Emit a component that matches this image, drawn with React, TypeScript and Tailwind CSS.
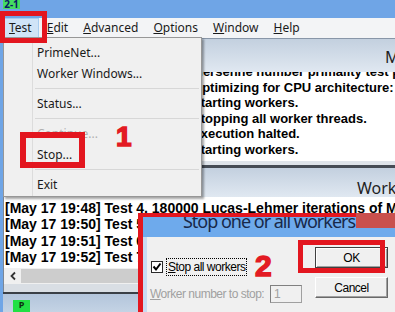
import React from "react";

type MenuEntry = { label: string; disabled?: boolean } | "sep";

const menuBar = ["Test", "Edit", "Advanced", "Options", "Window", "Help"];

const testMenu: MenuEntry[] = [
  { label: "PrimeNet..." },
  { label: "Worker Windows..." },
  "sep",
  { label: "Status..." },
  "sep",
  { label: "Continue...", disabled: true },
  { label: "Stop..." },
  "sep",
  { label: "Exit" },
];

const mainLines = [
  "[Main thread May 17 19:47] Mersenne number primality test program version 28.5",
  "[Main thread May 17 19:47] Optimizing for CPU architecture: Core i3/i5/i7, L2 cache size: 256 KB",
  "[Main thread May 17 19:47] Starting workers.",
  "[Main thread May 17 19:48] Stopping all worker threads.",
  "[Main thread May 17 19:48] Execution halted.",
  "[Main thread May 17 19:48] Starting workers.",
];

const workerLines = [
  "[May 17 19:48] Test 4, 180000 Lucas-Lehmer iterations of M4444091 using FMA3 FFT length 224K.",
  "[May 17 19:50] Test 5, 180000 Lucas-Lehmer iterations of M3888091 using FMA3 FFT length 192K.",
  "[May 17 19:51] Test 6, 180000 Lucas-Lehmer iterations of M3888089 using FMA3 FFT length 192K.",
  "[May 17 19:52] Test 7, 180000 Lucas-Lehmer iterations of M3888087 using FMA3 FFT length 192K.",
];

function TestMenu() {
  return (
    <div className="absolute left-[3px] top-[37px] flex h-[160px] w-[199px] flex-col border border-[#979797] bg-[#f0f0f0] pt-[4px] text-[12px] shadow-[2px_2px_2px_rgba(0,0,0,0.35)]">
      {testMenu.map((entry, i) =>
        entry === "sep" ? (
          <div key={i} className="flex h-[9px]">
            <div className="w-[29px] border-r border-[#dcdcdc]" />
            <div className="flex flex-1 items-center px-[2px]">
              <div className="h-px w-full bg-[#d7d7d7]" />
            </div>
          </div>
        ) : (
          <div key={i} className="flex h-[21px]">
            <div className="w-[29px] border-r border-[#dcdcdc]" />
            <div className={`flex items-center pl-[4px] ${entry.disabled ? "text-[#b0b0b0]" : "text-[#1a1a1a]"}`}>
              {entry.label}
            </div>
          </div>
        )
      )}
      <div className="flex flex-1">
        <div className="w-[29px] border-r border-[#dcdcdc]" />
      </div>
    </div>
  );
}

function StopDialog() {
  return (
    <div className="absolute left-[143px] top-[217px] flex h-[100px] w-[260px] flex-col">
      <div className="flex h-[20px] justify-center overflow-hidden bg-[#6eaaec] pr-[8px]">
        <span className="-mt-[5px] whitespace-nowrap text-[18px] leading-none tracking-[-1px] text-[#18294a]">
          Stop one or all workers
        </span>
      </div>
      <div className="flex flex-1 border-l-[4px] border-[#c8dbf2] bg-[#f0f0f0] pt-[10px] font-['Liberation_Sans',Arial,sans-serif] text-[12px] tracking-[-0.5px] text-black">
        <div className="flex w-[168px] flex-col pt-[11px]">
          <div className="flex h-[18px] items-center pl-[4px]">
            <div className="flex h-[12px] w-[12px] items-center justify-center border border-[#2a2a2a] bg-white">
              <svg width="10" height="10" viewBox="0 0 10 10">
                <polyline points="1.5,4.5 4,7.5 8.5,1.5" fill="none" stroke="#000" strokeWidth="2" />
              </svg>
            </div>
            <div className="ml-[3px] flex h-[18px] items-center whitespace-nowrap border border-dotted border-black px-[1px]">
              <span>
                <u>S</u>top all workers
              </span>
            </div>
          </div>
          <div className="mt-[9px] flex h-[18px] items-center pl-[3px] text-[#a0a0a0]">
            <span className="w-[120px] whitespace-nowrap">
              <u>W</u>orker number to stop:
            </span>
            <div className="flex h-[18px] w-[32px] items-center border border-[#a0a0a0] border-l-[#808080] border-t-[#808080] pl-[3px]">
              1
            </div>
          </div>
        </div>
        <div className="flex flex-col gap-[9px]">
          <div className="flex h-[21px] w-[73px] items-center justify-center border border-[#404040] bg-[#f0f0f0] shadow-[inset_1px_1px_0_#fff,inset_-1px_-1px_0_#a0a0a0]">
            OK
          </div>
          <div className="flex h-[21px] w-[73px] items-center justify-center border border-b-[#696969] border-l-white border-r-[#696969] border-t-white bg-[#f0f0f0] shadow-[inset_-1px_-1px_0_#a0a0a0]">
            Cancel
          </div>
        </div>
      </div>
    </div>
  );
}

export default function App() {
  return (
    <div className="relative h-[312px] w-[395px] overflow-hidden bg-[#6fa5e6] font-['Noto_Sans',sans-serif] text-[#1a1a1a]">
      {/* app title strip */}
      <div className="flex h-[18px] items-start pl-[3px]">
        <div className="flex h-[9px] w-[17px] items-end justify-center overflow-hidden bg-[#44de60] text-[10px] font-bold leading-none text-[#0b1a66]">
          2-1
        </div>
      </div>

      {/* menu bar */}
      <div className="flex h-[20px] items-stretch gap-px bg-[#f3f4f6] pl-[2px] text-[12px]">
        {menuBar.map((m, i) => (
          <div
            key={m}
            className={`flex items-center px-[7px] ${i === 0 ? "bg-[#d0e4f7] shadow-[inset_0_0_0_1px_#a8cdf0]" : ""}`}
          >
            <span>
              <u>{m[0]}</u>
              {m.slice(1)}
            </span>
          </div>
        ))}
      </div>

      {/* MDI client */}
      <div className="flex h-[274px] flex-col pl-[3px]">
        {/* main thread window */}
        <div className="flex h-[130px] flex-col border-t border-[#8896a8]">
          <div className="flex h-[33px] items-center whitespace-nowrap bg-gradient-to-b from-[#c3d0df] to-[#e0e8f1] pl-[382px] pt-[3px] text-[16px] text-[#1f1f1f]">
            Main thread
          </div>
          <div className="flex h-[89px]">
            <div className="w-[10px] border-r border-[#7d8794] bg-[#d5dce5]" />
            <div className="flex-1 overflow-hidden whitespace-nowrap bg-white pl-[10px] font-['Liberation_Sans',Arial,sans-serif] text-[13px] font-bold leading-[15.6px] text-black">
              <div className="-mt-[8px]">
                {mainLines.map((l) => (
                  <div key={l}>{l}</div>
                ))}
              </div>
            </div>
          </div>
          <div className="h-[4px] bg-[#dfe4ea]" />
          <div className="h-[3px] bg-[#464c55]" />
        </div>

        {/* worker window */}
        <div className="flex h-[126px] flex-col">
          <div className="flex h-[29px] items-center whitespace-nowrap bg-gradient-to-b from-[#c3d0df] to-[#e0e8f1] pl-[354px] pt-[10px] text-[16px] text-[#1f1f1f]">
            Worker #1
          </div>
          <div className="flex h-[95px]">
            <div className="w-[10px] border-r border-[#7d8794] bg-[#d5dce5]" />
            <div className="flex flex-1 flex-col">
              <div className="h-[71px] overflow-hidden whitespace-nowrap bg-white pl-[1px] pt-[3px] font-['Liberation_Sans',Arial,sans-serif] text-[14px] font-bold leading-[16.3px] text-black">
                {workerLines.map((l) => (
                  <div key={l}>{l}</div>
                ))}
              </div>
              <div className="flex h-[16px] bg-[#f0f0f0]">
                <div className="flex w-[17px] items-center justify-center">
                  <svg width="8" height="10" viewBox="0 0 8 10">
                    <polyline points="6,1.5 2.5,5 6,8.5" fill="none" stroke="#333" strokeWidth="1.8" />
                  </svg>
                </div>
                <div className="my-[1px] flex-1 bg-[#cdcdcd]" />
              </div>
              <div className="flex-1 bg-[#d9dee4]" />
            </div>
          </div>
          <div className="h-[2px] bg-[#3a3f46]" />
        </div>

        {/* next window */}
        <div className="flex flex-1 bg-gradient-to-b from-[#b3c5db] to-[#c4d3e4] pl-[10px] pt-[6px]">
          <div className="flex h-[12px] w-[17px] justify-center bg-[#22e044] text-[9px] font-bold leading-[10px] text-[#0e3010]">
            P
          </div>
        </div>
      </div>

      <TestMenu />
      <StopDialog />

      {/* red annotations */}
      <div className="absolute left-[138px] top-[213px] h-[120px] w-[300px] border-l-[5px] border-t-[4px] border-[#e3161f]" />
      <div className="absolute left-[356px] top-[213px] h-[15px] w-[39px] bg-[#c9504d]" />
      <div className="absolute left-0 top-[11px] h-[32px] w-[47px] border-[5px] border-[#e3161f]" />
      <div className="absolute left-[20px] top-[132px] h-[36px] w-[65px] border-[6px] border-[#e3161f]" />
      <div className="absolute left-[298px] top-[240px] h-[33px] w-[87px] border-[5px] border-[#e3161f]" />
      <div className="absolute left-[116px] top-[123px] font-['Liberation_Sans',Arial,sans-serif] text-[28px] font-bold leading-none text-[#e31b23] [-webkit-text-stroke:1.5px_#e31b23]">
        1
      </div>
      <div className="absolute left-[255px] top-[251px] font-['Liberation_Sans',Arial,sans-serif] text-[30px] font-bold leading-none text-[#e31b23] [-webkit-text-stroke:1.5px_#e31b23]">
        2
      </div>
    </div>
  );
}
